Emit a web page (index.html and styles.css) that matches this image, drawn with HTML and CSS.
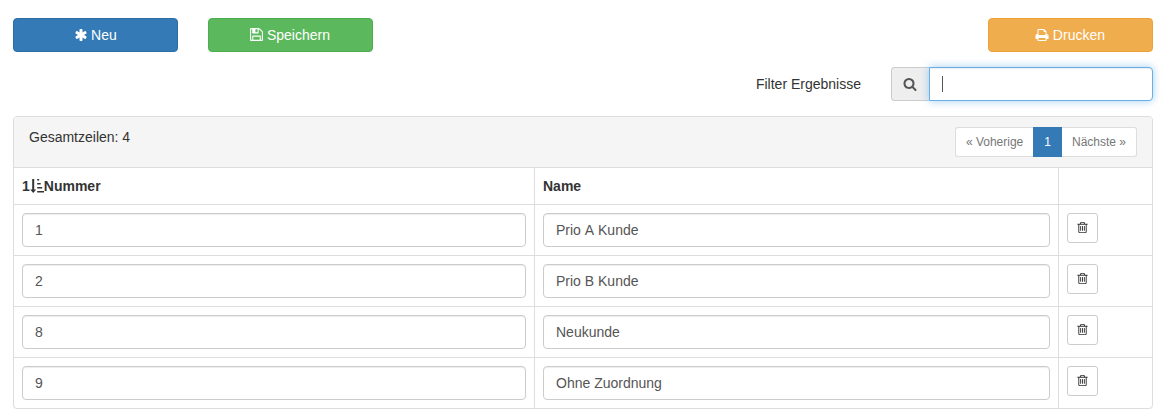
FILE: index.html
```html
<!DOCTYPE html>
<html lang="de">
<head>
    <meta charset="UTF-8">
    <meta name="viewport" content="width=device-width, initial-scale=1.0">
    <title>Prioritäten</title>
    <link rel="stylesheet" href="styles.css">
</head>
<body>
    <svg class="sprite" width="0" height="0">
        <symbol id="asterisk" viewBox="0 0 1792 1792"><path d="M1546 1050q46 26 59.5 77.5t-12.5 97.5l-64 110q-26 46-77.5 59.5t-97.5-12.5l-266-153v307q0 52-38 90t-90 38h-128q-52 0-90-38t-38-90v-307l-266 153q-46 26-97.5 12.5t-77.5-59.5l-64-110q-26-46-12.5-97.5t59.5-77.5l266-154-266-154q-46-26-59.5-77.5t12.5-97.5l64-110q26-46 77.5-59.5t97.5 12.5l266 153v-307q0-52 38-90t90-38h128q52 0 90 38t38 90v307l266-153q46-26 97.5-12.5t77.5 59.5l64 110q26 46 12.5 97.5t-59.5 77.5l-266 154z"/></symbol>
        <symbol id="floppy" viewBox="0 0 1792 1792"><path d="M512 1536h768v-384h-768v384zm896 0h128v-896q0-14-10-38.5t-20-34.5l-281-281q-10-10-34-20t-39-10v416q0 40-28 68t-68 28h-576q-40 0-68-28t-28-68v-416h-128v1280h128v-416q0-40 28-68t68-28h832q40 0 68 28t28 68v416zm-384-928v-320q0-13-9.5-22.5t-22.5-9.5h-192q-13 0-22.5 9.5t-9.5 22.5v320q0 13 9.5 22.5t22.5 9.5h192q13 0 22.5-9.5t9.5-22.5zm640 32v928q0 40-28 68t-68 28h-1344q-40 0-68-28t-28-68v-1344q0-40 28-68t68-28h928q40 0 88 20t76 48l280 280q28 28 48 76t20 88z"/></symbol>
        <symbol id="print" viewBox="0 0 1792 1792"><path d="M448 1536h896v-256h-896v256zm0-640h896v-384h-160q-40 0-68-28t-28-68v-160h-640v640zm1152 64q0-26-19-45t-45-19-45 19-19 45 19 45 45 19 45-19 19-45zm128 0v416q0 13-9.5 22.5t-22.5 9.5h-224v160q0 40-28 68t-68 28h-960q-40 0-68-28t-28-68v-160h-224q-13 0-22.5-9.5t-9.5-22.5v-416q0-79 56.5-135.5t135.500-56.5h64v-544q0-40 28-68t68-28h672q40 0 88 20t76 48l152 152q28 28 48 76t20 88v256h64q79 0 135.5 56.5t56.5 135.5z"/></symbol>
        <symbol id="search" viewBox="0 0 1792 1792"><path d="M1216 832q0-185-131.5-316.5t-316.5-131.5-316.5 131.5-131.5 316.5 131.5 316.5 316.5 131.5 316.5-131.5 131.5-316.5zm512 832q0 52-38 90t-90 38q-54 0-90-38l-343-342q-179 124-399 124-143 0-273.5-55.5t-225-150-150-225-55.5-273.5 55.5-273.5 150-225 225-150 273.5-55.5 273.5 55.5 225 150 150 225 55.5 273.5q0 220-124 399l343 343q37 37 37 90z"/></symbol>
        <symbol id="trash" viewBox="0 0 1792 1792"><path d="M704 736v576q0 14-9 23t-23 9h-64q-14 0-23-9t-9-23v-576q0-14 9-23t23-9h64q14 0 23 9t9 23zm256 0v576q0 14-9 23t-23 9h-64q-14 0-23-9t-9-23v-576q0-14 9-23t23-9h64q14 0 23 9t9 23zm256 0v576q0 14-9 23t-23 9h-64q-14 0-23-9t-9-23v-576q0-14 9-23t23-9h64q14 0 23 9t9 23zm128 724v-948h-896v948q0 22 7 40.5t14.5 27 10.5 8.5h832q3 0 10.5-8.5t14.5-27 7-40.5zm-672-1076h448l-48-117q-7-9-17-11h-317q-10 2-17 11zm928 32v64q0 14-9 23t-23 9h-96v948q0 83-47 143.5t-113 60.5h-832q-66 0-113-58.5t-47-141.5v-952h-96q-14 0-23-9t-9-23v-64q0-14 9-23t23-9h309l70-167q15-37 54-63t79-26h320q40 0 79 26t54 63l70 167h309q14 0 23 9t9 23z"/></symbol>
        <symbol id="sort" viewBox="0 0 14 14"><path d="M2.200 0h2v10.500h2L3.200 14 0.200 10.500h2zM7.200 0h2v1.500h-2zM7.200 4h3.500v1.500H7.200zM7.200 8h5v1.500h-5zM7.200 12H14v1.500H7.200z"/></symbol>
    </svg>

    <div class="container">
        <div class="toolbar">
            <button class="btn btn-primary"><svg class="icon"><use href="#asterisk"/></svg> Neu</button>
            <button class="btn btn-success"><svg class="icon icon-floppy"><use href="#floppy"/></svg> Speichern</button>
            <button class="btn btn-warning"><svg class="icon"><use href="#print"/></svg> Drucken</button>
        </div>

        <div class="filter">
            <label class="filter-label" for="filter">Filter Ergebnisse</label>
            <div class="input-group">
                <span class="addon"><svg class="icon"><use href="#search"/></svg></span>
                <input class="form-control filter-input" id="filter" type="text">
                <span class="caret"></span>
            </div>
        </div>

        <div class="panel">
            <div class="panel-heading">
                <span>Gesamtzeilen: 4</span>
                <div class="pagination">
                    <a class="page">« Voherige</a>
                    <a class="page active">1</a>
                    <a class="page">Nächste »</a>
                </div>
            </div>
            <table class="table">
                <colgroup>
                    <col class="col-number">
                    <col class="col-name">
                    <col>
                </colgroup>
                <thead>
                    <tr>
                        <th>1<svg class="icon-sort"><use href="#sort"/></svg>Nummer</th>
                        <th>Name</th>
                        <th></th>
                    </tr>
                </thead>
                <tbody>
                    <tr>
                        <td><input class="form-control" type="text" value="1"></td>
                        <td><input class="form-control" type="text" value="Prio A Kunde"></td>
                        <td><button class="btn-delete"><svg class="icon-trash"><use href="#trash"/></svg></button></td>
                    </tr>
                    <tr>
                        <td><input class="form-control" type="text" value="2"></td>
                        <td><input class="form-control" type="text" value="Prio B Kunde"></td>
                        <td><button class="btn-delete"><svg class="icon-trash"><use href="#trash"/></svg></button></td>
                    </tr>
                    <tr>
                        <td><input class="form-control" type="text" value="8"></td>
                        <td><input class="form-control" type="text" value="Neukunde"></td>
                        <td><button class="btn-delete"><svg class="icon-trash"><use href="#trash"/></svg></button></td>
                    </tr>
                    <tr>
                        <td><input class="form-control" type="text" value="9"></td>
                        <td><input class="form-control" type="text" value="Ohne Zuordnung"></td>
                        <td><button class="btn-delete"><svg class="icon-trash"><use href="#trash"/></svg></button></td>
                    </tr>
                </tbody>
            </table>
        </div>
    </div>
</body>
</html>
```
FILE: styles.css
```css
* {
    box-sizing: border-box;
}

body {
    margin: 0;
    background: #fff;
    color: #333;
    font: 14px/20px "Liberation Sans", Arial, sans-serif;
    font-kerning: none;
}

button, input {
    font: inherit;
    font-kerning: none;
}

.sprite {
    position: absolute;
}

.container {
    width: 1140px;
    margin: 18px 0 0 13px;
}

/* Buttons */
.toolbar {
    display: flex;
    gap: 30px;
}

.btn {
    width: 165px;
    height: 34px;
    padding: 0;
    border: 1px solid;
    border-radius: 4px;
    color: #fff;
}

.btn-primary { background: #337ab7; border-color: #2e6da4; }
.btn-success { background: #5cb85c; border-color: #4cae4c; }
.btn-warning { background: #f0ad4e; border-color: #eea236; margin-left: auto; }

.icon {
    width: 14px;
    height: 14px;
    margin: 0 -0.5px;
    vertical-align: -2px;
    fill: currentColor;
}

.icon-floppy {
    width: 15px;
    height: 15px;
    margin: 0 -1px 0 -2px;
}

/* Filter */
.filter {
    display: flex;
    justify-content: flex-end;
    align-items: center;
    gap: 30px;
    margin: 15px 0;
}

.input-group {
    display: flex;
    position: relative;
    width: 262px;
}

.addon {
    display: flex;
    justify-content: center;
    align-items: center;
    width: 38px;
    height: 34px;
    padding-right: 1px;
    background: #eee;
    border: 1px solid #ccc;
    border-right: 0;
    border-radius: 4px 0 0 4px;
    color: #555;
}

.form-control {
    display: block;
    width: 100%;
    height: 34px;
    padding: 6px 12px;
    border: 1px solid #ccc;
    border-radius: 4px;
    background: #fff;
    color: #555;
    box-shadow: inset 0 1px 1px rgba(0, 0, 0, 0.075);
    outline: 0;
}

.filter-input {
    flex: 1;
    width: auto;
    min-width: 0;
    border-color: #66afe9;
    border-radius: 0 4px 4px 0;
    box-shadow: inset 0 1px 1px rgba(0, 0, 0, 0.075), 0 0 8px rgba(102, 175, 233, 0.6);
}

.caret {
    position: absolute;
    top: 9px;
    left: 51px;
    width: 1px;
    height: 16px;
    background: #555;
}

/* Panel */
.panel {
    border: 1px solid #ddd;
    border-radius: 4px;
    box-shadow: 0 1px 1px rgba(0, 0, 0, 0.05);
}

.panel-heading {
    display: flex;
    justify-content: space-between;
    height: 51px;
    padding: 10px 15px;
    background: #f5f5f5;
    border-bottom: 1px solid #ddd;
    border-radius: 3px 3px 0 0;
}

.pagination {
    display: flex;
    font-size: 12px;
    line-height: 18px;
    font-kerning: auto;
}

.page {
    height: 30px;
    padding: 5px 10px;
    border: 1px solid #ddd;
    background: #fff;
    color: #777;
}

.page:first-child {
    border-radius: 3px 0 0 3px;
    border-right: 0;
}

.page:last-child {
    border-radius: 0 3px 3px 0;
    border-left: 0;
}

.page.active {
    background: #337ab7;
    border-color: #337ab7;
    color: #fff;
}

/* Table */
.table {
    width: 100%;
    table-layout: fixed;
    border-spacing: 0;
}

.col-number { width: 521px; }
.col-name { width: 524px; }

th, td {
    padding: 8px;
    text-align: left;
    vertical-align: top;
    border-right: 1px solid #ddd;
    border-bottom: 1px solid #ddd;
}

th:last-child, td:last-child {
    border-right: 0;
}

tbody tr:last-child td {
    border-bottom: 0;
}

.icon-sort {
    width: 14px;
    height: 14px;
    vertical-align: -2px;
    fill: currentColor;
}

.btn-delete {
    display: block;
    width: 31px;
    height: 30px;
    padding: 0 0 1px;
    border: 1px solid #ccc;
    border-radius: 3px;
    background: #fff;
    color: #333;
}

.icon-trash {
    display: block;
    width: 13px;
    height: 13px;
    margin: 0 auto;
    fill: currentColor;
}
```
